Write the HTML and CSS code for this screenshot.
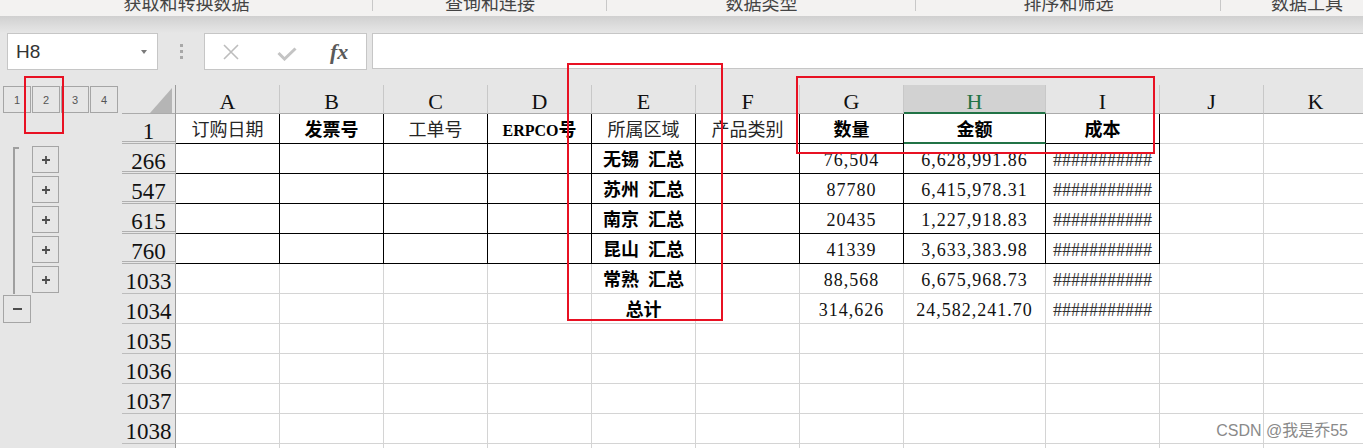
FILE: index.html
```html
<!DOCTYPE html>
<html lang="zh-CN">
<head>
  <meta charset="UTF-8">
  <title>数据 - 分类汇总</title>
  <link rel="stylesheet" href="styles.css">
</head>
<body>

<!-- 功能区分组标题（只露出下半截） -->
<div class="ribbon">
  <div class="rgroup"><span>获取和转换数据</span></div>
  <div class="rgroup"><span>查询和连接</span></div>
  <div class="rgroup"><span>数据类型</span></div>
  <div class="rgroup"><span>排序和筛选</span></div>
  <div class="rgroup"><span>数据工具</span></div>
</div>
<div class="ribbon-shade"></div>

<!-- 编辑栏 -->
<div class="formula-bar">
  <div class="name-box"><span class="name">H8</span><span class="caret"></span></div>
  <div class="grip"><i></i><i></i><i></i></div>
  <div class="fx-box">
    <svg class="ico-x" width="18" height="18" viewBox="0 0 18 18"><path d="M2 2L16 16M16 2L2 16" stroke="#bdbdbd" stroke-width="1.6" fill="none"/></svg>
    <svg class="ico-ok" width="20" height="14" viewBox="0 0 20 14"><path d="M1.5 6L7.5 12L18.5 1.5" stroke="#c4c4c4" stroke-width="3" fill="none"/></svg>
    <span class="fx">fx</span>
  </div>
  <div class="formula-input"></div>
</div>

<div class="workarea">
  <!-- 分级显示 -->
  <div class="outline">
    <div class="levels">
      <div class="lvl">1</div>
      <div class="lvl">2</div>
      <div class="lvl">3</div>
      <div class="lvl">4</div>
    </div>
    <div class="orow"></div>
    <div class="orow"><div class="bar top"></div><div class="obtn plus"><svg width="8" height="8" viewBox="0 0 8 8"><path d="M0 4H8M4 0V8" stroke="#4d4d4d" stroke-width="1.8"/></svg></div></div>
    <div class="orow"><div class="bar"></div><div class="obtn plus"><svg width="8" height="8" viewBox="0 0 8 8"><path d="M0 4H8M4 0V8" stroke="#4d4d4d" stroke-width="1.8"/></svg></div></div>
    <div class="orow"><div class="bar"></div><div class="obtn plus"><svg width="8" height="8" viewBox="0 0 8 8"><path d="M0 4H8M4 0V8" stroke="#4d4d4d" stroke-width="1.8"/></svg></div></div>
    <div class="orow"><div class="bar"></div><div class="obtn plus"><svg width="8" height="8" viewBox="0 0 8 8"><path d="M0 4H8M4 0V8" stroke="#4d4d4d" stroke-width="1.8"/></svg></div></div>
    <div class="orow"><div class="bar"></div><div class="obtn plus"><svg width="8" height="8" viewBox="0 0 8 8"><path d="M0 4H8M4 0V8" stroke="#4d4d4d" stroke-width="1.8"/></svg></div></div>
    <div class="orow"><div class="obtn minus"><svg width="9" height="2" viewBox="0 0 9 2"><path d="M0 1H9" stroke="#4d4d4d" stroke-width="2"/></svg></div></div>
  </div>

  <!-- 工作表 -->
  <div class="sheet">
    <div class="row">
      <div class="corner"><svg width="22" height="25" viewBox="0 0 22 25"><polygon points="22,0 22,25 0,25" fill="#b5b5b5"/></svg></div>
      <div class="ch">A</div>
      <div class="ch">B</div>
      <div class="ch">C</div>
      <div class="ch">D</div>
      <div class="ch">E</div>
      <div class="ch">F</div>
      <div class="ch">G</div>
      <div class="ch on">H</div>
      <div class="ch">I</div>
      <div class="ch">J</div>
      <div class="ch">K</div>
    </div>

    <div class="row blk">
      <div class="rh hid">1</div>
      <div class="c t">订购日期</div>
      <div class="c t b">发票号</div>
      <div class="c t">工单号</div>
      <div class="c t b"><span class="lat">ERPCO</span>号</div>
      <div class="c t">所属区域</div>
      <div class="c t">产品类别</div>
      <div class="c t b">数量</div>
      <div class="c t b sel">金额</div>
      <div class="c t b">成本</div>
      <div class="c tail"></div>
      <div class="c tail"></div>
    </div>

    <div class="row blk">
      <div class="rh hid">266</div>
      <div class="c"></div><div class="c"></div><div class="c"></div><div class="c"></div>
      <div class="c t b">无锡&ensp;汇总</div>
      <div class="c"></div>
      <div class="c n">76,504</div>
      <div class="c n">6,628,991.86</div>
      <div class="c hash">###########</div>
      <div class="c tail"></div><div class="c tail"></div>
    </div>

    <div class="row blk">
      <div class="rh hid">547</div>
      <div class="c"></div><div class="c"></div><div class="c"></div><div class="c"></div>
      <div class="c t b">苏州&ensp;汇总</div>
      <div class="c"></div>
      <div class="c n">87780</div>
      <div class="c n">6,415,978.31</div>
      <div class="c hash">###########</div>
      <div class="c tail"></div><div class="c tail"></div>
    </div>

    <div class="row blk">
      <div class="rh hid">615</div>
      <div class="c"></div><div class="c"></div><div class="c"></div><div class="c"></div>
      <div class="c t b">南京&ensp;汇总</div>
      <div class="c"></div>
      <div class="c n">20435</div>
      <div class="c n">1,227,918.83</div>
      <div class="c hash">###########</div>
      <div class="c tail"></div><div class="c tail"></div>
    </div>

    <div class="row blk">
      <div class="rh hid">760</div>
      <div class="c"></div><div class="c"></div><div class="c"></div><div class="c"></div>
      <div class="c t b">昆山&ensp;汇总</div>
      <div class="c"></div>
      <div class="c n">41339</div>
      <div class="c n">3,633,383.98</div>
      <div class="c hash">###########</div>
      <div class="c tail"></div><div class="c tail"></div>
    </div>

    <div class="row">
      <div class="rh">1033</div>
      <div class="c"></div><div class="c"></div><div class="c"></div><div class="c"></div>
      <div class="c t b">常熟&ensp;汇总</div>
      <div class="c"></div>
      <div class="c n">88,568</div>
      <div class="c n">6,675,968.73</div>
      <div class="c hash">###########</div>
      <div class="c"></div><div class="c"></div>
    </div>

    <div class="row">
      <div class="rh">1034</div>
      <div class="c"></div><div class="c"></div><div class="c"></div><div class="c"></div>
      <div class="c t b">总计</div>
      <div class="c"></div>
      <div class="c n">314,626</div>
      <div class="c n">24,582,241.70</div>
      <div class="c hash">###########</div>
      <div class="c"></div><div class="c"></div>
    </div>

    <div class="row">
      <div class="rh">1035</div>
      <div class="c"></div><div class="c"></div><div class="c"></div><div class="c"></div><div class="c"></div><div class="c"></div>
      <div class="c"></div><div class="c"></div><div class="c"></div><div class="c"></div><div class="c"></div>
    </div>
    <div class="row">
      <div class="rh">1036</div>
      <div class="c"></div><div class="c"></div><div class="c"></div><div class="c"></div><div class="c"></div><div class="c"></div>
      <div class="c"></div><div class="c"></div><div class="c"></div><div class="c"></div><div class="c"></div>
    </div>
    <div class="row">
      <div class="rh">1037</div>
      <div class="c"></div><div class="c"></div><div class="c"></div><div class="c"></div><div class="c"></div><div class="c"></div>
      <div class="c"></div><div class="c"></div><div class="c"></div><div class="c"></div><div class="c"></div>
    </div>
    <div class="row">
      <div class="rh">1038</div>
      <div class="c"></div><div class="c"></div><div class="c"></div><div class="c"></div><div class="c"></div><div class="c"></div>
      <div class="c"></div><div class="c"></div><div class="c"></div><div class="c"></div><div class="c"></div>
    </div>
    <div class="row">
      <div class="rh">1039</div>
      <div class="c"></div><div class="c"></div><div class="c"></div><div class="c"></div><div class="c"></div><div class="c"></div>
      <div class="c"></div><div class="c"></div><div class="c"></div><div class="c"></div><div class="c"></div>
    </div>
  </div>
</div>

<!-- 红框标注 -->
<div class="mark mark-level"></div>
<div class="mark mark-area"></div>
<div class="mark mark-sum"></div>

<div class="watermark">CSDN @我是乔55</div>

</body>
</html>
```

FILE: styles.css
```css
body {
  margin: 0;
  width: 1363px;
  height: 448px;
  overflow: hidden;
  position: relative;
  background: #e6e6e6;
  font-family: "Noto Sans CJK SC", sans-serif;
}

/* 功能区 */
.ribbon {
  display: grid;
  grid-template-columns: 373px 234px 309px 305px 172px;
  height: 16px;
  overflow: hidden;
  background: #f3f2f1;
}

.rgroup {
  text-align: center;
  background: linear-gradient(#c8c8c8, #c8c8c8) no-repeat right top / 1px 11px;
}

.rgroup:last-child {
  background: none;
}

.rgroup span {
  display: block;
  font-size: 18px;
  line-height: 18px;
  margin-top: -7px;
  color: #444;
  white-space: nowrap;
}

.ribbon-shade {
  height: 17px;
  background: linear-gradient(#d0d0d0, #dedede 60%, #e6e6e6);
}

/* 编辑栏 */
.formula-bar {
  display: flex;
  height: 37px;
}

.name-box {
  margin-left: 7px;
  width: 151px;
  box-sizing: border-box;
  background: #fff;
  border: 1px solid #c6c6c6;
  display: flex;
  align-items: center;
  justify-content: space-between;
  padding: 0 10px 0 8px;
}

.name {
  font-family: "Liberation Sans", sans-serif;
  font-size: 19px;
  color: #333;
}

.caret {
  width: 0;
  height: 0;
  border-left: 3.5px solid transparent;
  border-right: 3.5px solid transparent;
  border-top: 4px solid #7a7a7a;
}

.grip {
  width: 46px;
  display: flex;
  flex-direction: column;
  align-items: center;
  justify-content: center;
  gap: 3px;
}

.grip i {
  display: block;
  width: 3px;
  height: 3px;
  background: #a8a8a8;
}

.fx-box {
  width: 163px;
  box-sizing: border-box;
  background: #fff;
  border: 1px solid #c6c6c6;
  display: flex;
  align-items: center;
  padding-left: 17px;
}

.ico-ok {
  margin: 5px 0 0 37px;
}

.fx {
  margin-left: 33px;
  font-family: "Liberation Serif", serif;
  font-style: italic;
  font-weight: bold;
  font-size: 22px;
  color: #5a5a5a;
}

.formula-input {
  flex: 1;
  height: 36px;
  box-sizing: border-box;
  margin-left: 5px;
  background: #fff;
  border: 1px solid #c6c6c6;
  border-right: none;
}

/* 工作区 */
.workarea {
  display: flex;
  margin-top: 15px;
}

.outline {
  width: 122px;
  flex: none;
}

.levels {
  height: 29px;
  display: flex;
  gap: 1px;
  padding: 1px 0 0 3px;
  box-sizing: border-box;
}

.lvl {
  width: 28px;
  height: 27px;
  box-sizing: border-box;
  border: 1px solid #a5a5a5;
  font-family: "Liberation Sans", sans-serif;
  font-size: 11px;
  color: #555;
  display: flex;
  align-items: center;
  justify-content: center;
}

.orow {
  height: 30px;
  display: flex;
  align-items: flex-start;
}

.bar {
  flex: none;
  width: 6px;
  height: 30px;
  margin-left: 13px;
  box-sizing: border-box;
  border-left: 2px solid #9f9f9f;
}

.bar.top {
  height: 27px;
  margin-top: 3px;
  border-top: 2px solid #9f9f9f;
}

.obtn {
  box-sizing: border-box;
  border: 1px solid #a5a5a5;
  display: flex;
  align-items: center;
  justify-content: center;
}

.plus {
  width: 27px;
  height: 27px;
  margin: 2px 0 0 13px;
}

.minus {
  width: 28px;
  height: 28px;
  margin: 1px 0 0 3px;
}

.sheet {
  display: grid;
  grid-template-columns: 54px 104px 104px 104px 104px 104px 104px 104px 142px 114px 104px 104px;
  grid-template-rows: 29px;
  grid-auto-rows: 30px;
  flex: none;
}

.row {
  display: contents;
}

.corner {
  box-sizing: border-box;
  border-right: 1px solid #9b9b9b;
  border-bottom: 1px solid #ababab;
  display: flex;
  align-items: flex-end;
  justify-content: flex-end;
  padding: 0 3px 0 0;
}

.ch {
  box-sizing: border-box;
  border-right: 1px solid #c8c8c8;
  border-bottom: 1px solid #ababab;
  text-align: center;
  font-family: "Liberation Serif", serif;
  font-size: 22px;
  line-height: 28px;
  padding-top: 3px;
  color: #111;
}

.ch.on {
  background: #d2d2d2;
  color: #217346;
  border-bottom: 2px solid #217346;
}

.rh {
  box-sizing: border-box;
  border-right: 1px solid #9b9b9b;
  border-bottom: 1px solid #bcbcbc;
  text-align: center;
  font-family: "Liberation Serif", serif;
  font-size: 23px;
  line-height: 29px;
  padding-top: 3px;
  color: #111;
  overflow: hidden;
}

.rh.hid {
  border-bottom: 3px double #b0b0b0;
}

.c {
  box-sizing: border-box;
  background: #fff;
  border-right: 1px solid #d4d4d4;
  border-bottom: 1px solid #d4d4d4;
  text-align: center;
  font-size: 18px;
  line-height: 29px;
  white-space: nowrap;
  color: #262626;
}

.blk > .c {
  border-right-color: #000;
  border-bottom-color: #000;
}

.blk > .c.tail {
  border-right-color: #d4d4d4;
  border-bottom-color: #d4d4d4;
}

.blk > .c.sel {
  border-bottom: 2px solid #217346;
}

.t.b {
  font-weight: bold;
  color: #000;
}

.lat {
  font-family: "Liberation Serif", serif;
  font-size: 16px;
}

.n {
  font-family: "Liberation Serif", serif;
  letter-spacing: 1px;
  padding-top: 2px;
  color: #111;
}

.hash {
  font-family: "Liberation Serif", serif;
  padding-top: 2px;
  color: #333;
}

/* 标注 */
.mark {
  position: absolute;
  box-sizing: border-box;
  border: 2px solid #e81123;
}

.mark-level {
  left: 24px;
  top: 76px;
  width: 40px;
  height: 58px;
}

.mark-area {
  left: 567px;
  top: 63px;
  width: 156px;
  height: 258px;
}

.mark-sum {
  left: 796px;
  top: 76px;
  width: 359px;
  height: 78px;
}

.watermark {
  position: absolute;
  top: 421px;
  right: 15px;
  font-family: "Liberation Sans", "Noto Sans CJK SC", sans-serif;
  font-size: 16px;
  line-height: 20px;
  color: #8a8a8a;
}
```
